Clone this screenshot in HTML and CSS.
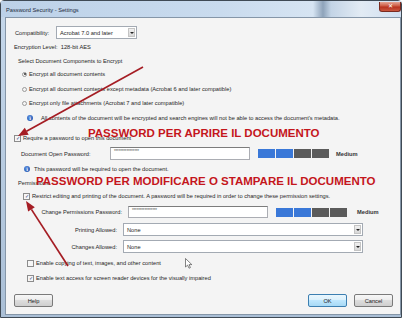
FILE: index.html
```html
<!DOCTYPE html>
<html lang="en">
<head>
    <meta charset="UTF-8">
    <meta name="viewport" content="width=device-width, initial-scale=1.0">
    <title>Password Security - Settings</title>
    <link rel="stylesheet" href="styles.css">
</head>
<body>

<div class="screen">
    <div class="window">
        <!-- Title bar -->
        <div class="titlebar">
            <span class="title">Password Security - Settings</span>
            <span class="close">&#x2715;</span>
        </div>

        <div class="content">
            <div class="row compat">
                <span class="label">Compatibility:</span>
                <div class="select compat-select">Acrobat 7.0 and later<span class="select-arrow"></span></div>
            </div>
            <div class="row enc gap-s">Encryption Level:&nbsp;&nbsp;128-bit AES</div>

            <div class="row section">Select Document Components to Encrypt</div>
            <div class="row option gap-s"><span class="radio checked"></span>Encrypt all document contents</div>
            <div class="row option gap-m"><span class="radio"></span>Encrypt all document contents except metadata (Acrobat 6 and later compatible)</div>
            <div class="row option"><span class="radio"></span>Encrypt only file attachments (Acrobat 7 and later compatible)</div>
            <div class="row info gap-m"><span class="info-icon">i</span>All contents of the document will be encrypted and search engines will not be able to access the document's metadata.</div>

            <div class="row check-open gap-l"><span class="box">&#x2713;</span>Require a password to open this document</div>
            <div class="row pwd-row">
                <span class="pwd-label">Document Open Password:</span>
                <div class="input">****************</div>
                <div class="meter"><span class="seg"></span><span class="seg"></span><span class="seg off"></span><span class="seg off"></span></div>
                <span class="strength">Medium</span>
            </div>
            <div class="row info info-open"><span class="info-icon">i</span>This password will be required to open the document.</div>

            <div class="row section">Permissions</div>
            <div class="row check-perm gap-s"><span class="box">&#x2713;</span>Restrict editing and printing of the document. A password will be required in order to change these permission settings.</div>
            <div class="row field change-row gap-m">
                <span class="field-label wide">Change Permissions Password:</span>
                <div class="input">****************</div>
                <div class="meter"><span class="seg"></span><span class="seg"></span><span class="seg off"></span><span class="seg off"></span></div>
                <span class="strength far">Medium</span>
            </div>
            <div class="row field gap-m">
                <span class="field-label">Printing Allowed:</span>
                <div class="select wide-select">None<span class="select-arrow"></span></div>
            </div>
            <div class="row field">
                <span class="field-label">Changes Allowed:</span>
                <div class="select wide-select">None<span class="select-arrow"></span></div>
            </div>
            <div class="row check-sub gap-m"><span class="box empty"></span>Enable copying of text, images, and other content</div>
            <div class="row check-sub gap-m"><span class="box">&#x2713;</span>Enable text access for screen reader devices for the visually impaired</div>

            <div class="buttons">
                <div class="btn">Help</div>
                <div class="btn primary">OK</div>
                <div class="btn">Cancel</div>
            </div>
        </div>
    </div>

    <!-- Annotations drawn over the screenshot -->
    <div class="note note-open">PASSWORD PER APRIRE IL DOCUMENTO</div>
    <div class="note note-perm">PASSWORD PER MODIFICARE O STAMPARE IL DOCUMENTO</div>

    <svg class="arrows" width="405" height="324" viewBox="0 0 405 324">
        <line x1="143" y1="67" x2="26.5" y2="131.3" />
        <polygon points="18,136 28.7,134.7 24.8,127.7" />
        <line x1="68" y1="266" x2="31.4" y2="209.4" />
        <polygon points="26,201 34.8,207.2 28.1,211.6" />
    </svg>

    <svg class="cursor" width="8" height="11" viewBox="0 0 8 11">
        <path d="M0.5 0.5 L0.5 9 L2.6 7.1 L4 10.2 L5.4 9.6 L4.1 6.6 L6.8 6.6 Z" />
    </svg>
</div>

</body>
</html>
```

FILE: styles.css
```css
body {
    margin: 0;
    background: #ffffff;
    font-family: "Liberation Sans", Arial, sans-serif;
}

.screen {
    position: relative;
    width: 405px;
    height: 324px;
    overflow: hidden;
}

/* Window frame */
.window {
    width: 402px;
    height: 318px;
    box-sizing: border-box;
    display: flex;
    flex-direction: column;
    padding: 0 0 2px 4px;
    border: 1px solid #3f4a55;
    border-radius: 4px 4px 0 0;
    background: linear-gradient(to bottom, #c6d8eb, #aabfd6);
}

.titlebar {
    height: 16px;
    display: flex;
    justify-content: space-between;
    align-items: flex-start;
    margin-left: -4px;
    padding-left: 5px;
    background: linear-gradient(to right, #bcd1e8 0%, #c9dbee 55%, #d6e4f2 78%, #8ea3ba 80.5%, #c3d4e6 82.5%, #e2ebf4 90%, #cfdef0 100%);
}

.title {
    font-size: 5.7px;
    color: #1b2a3a;
    line-height: 16px;
    margin-top: 1px;
}

.close {
    width: 22px;
    height: 10px;
    margin-top: 1px;
    box-sizing: border-box;
    border: 1px solid #7a2a20;
    border-top: none;
    border-radius: 0 0 3px 3px;
    background: linear-gradient(to bottom, #e4a595, #cc5a43 45%, #b8321f 55%, #c9573f);
    color: #ffffff;
    font-size: 6px;
    line-height: 9px;
    text-align: center;
}

.content {
    flex: 1;
    background: #f4f4f4;
    border: 1px solid #8596a8;
    padding-top: 8px;
    color: #262626;
    font-size: 5.7px;
}

.row {
    display: flex;
    align-items: center;
    height: 10px;
    margin-top: 4px;
    white-space: nowrap;
}

.gap-s { margin-top: 3px; }
.gap-m { margin-top: 5px; }
.gap-l { margin-top: 10px; }

/* Compatibility row */
.compat {
    height: 13px;
    margin-top: 0;
    padding-left: 9px;
}

.compat .label {
    width: 41px;
}

.enc { padding-left: 8px; }
.section { padding-left: 12px; }

/* Select boxes */
.select {
    height: 13px;
    box-sizing: border-box;
    display: flex;
    align-items: center;
    padding-left: 3px;
    border: 1px solid #a3aab3;
    background: #ffffff;
}

.compat-select { width: 81px; }
.wide-select { width: 240px; }

.select-arrow {
    margin-left: auto;
    margin-right: 1px;
    width: 7px;
    height: 9px;
    background: linear-gradient(to bottom, #f0f0f0, #d8d8d8);
    border: 1px solid #c4c4c4;
    box-sizing: border-box;
    display: flex;
    align-items: center;
    justify-content: center;
}

.select-arrow::after {
    content: "";
    border-left: 2px solid transparent;
    border-right: 2px solid transparent;
    border-top: 2px solid #222222;
}

/* Radio buttons */
.option { padding-left: 16px; }

.radio {
    width: 5px;
    height: 5px;
    margin-right: 2px;
    border: 1px solid #9a9a9a;
    border-radius: 50%;
    background: #f4f4f4;
    box-sizing: border-box;
    display: flex;
    align-items: center;
    justify-content: center;
}

.radio.checked::after {
    content: "";
    width: 2px;
    height: 2px;
    border-radius: 50%;
    background: #333333;
}

/* Info lines */
.info { padding-left: 21px; }

.info-icon {
    width: 6px;
    height: 6px;
    margin-right: 8px;
    border-radius: 50%;
    background: radial-gradient(circle at 40% 35%, #5c8fe0, #1b4fa8);
    color: #ffffff;
    font-size: 4.5px;
    font-weight: bold;
    font-family: "DejaVu Serif", serif;
    display: flex;
    align-items: center;
    justify-content: center;
}

.info-open { padding-left: 18px; }
.info-open .info-icon { margin-right: 4px; }

/* Checkboxes */
.box {
    width: 5px;
    height: 5px;
    margin-right: 2px;
    border: 1px solid #8c8c8c;
    background: #f6f6f6;
    color: #2a3f7a;
    font-size: 5px;
    line-height: 5px;
    text-align: center;
    box-sizing: content-box;
    overflow: hidden;
}

.check-open { padding-left: 8px; }
.check-perm { padding-left: 17px; }
.check-sub { padding-left: 21px; }

/* Password rows */
.pwd-row {
    height: 13px;
    padding-left: 15px;
}

.pwd-label { width: 89px; }

.input {
    width: 140px;
    height: 13px;
    box-sizing: border-box;
    padding-left: 3px;
    border: 1px solid #abadb3;
    border-top-color: #7c7c7c;
    background: #ffffff;
    color: #666666;
    font-size: 4.5px;
    line-height: 8px;
    letter-spacing: -0.2px;
}

.meter {
    display: flex;
    gap: 1px;
    margin-left: 8px;
}

.seg {
    width: 17px;
    height: 9px;
    background: #3a78d8;
}

.seg.off { background: #5b5b5b; }

.strength {
    margin-left: 7px;
    font-weight: bold;
    color: #333333;
}

.strength.far { margin-left: 10px; }

/* Permission fields */
.field { height: 13px; }
.change-row { height: 12px; }
.change-row .input { height: 12px; }

.field-label {
    width: 111px;
    margin-right: 6px;
    text-align: right;
}

.field-label.wide { width: 116px; }

/* Bottom buttons */
.buttons {
    display: flex;
    gap: 7px;
    margin-top: 11px;
    padding: 0 7px 0 8px;
}

.buttons .btn:first-child { margin-right: auto; }

.btn {
    width: 39px;
    height: 13px;
    box-sizing: border-box;
    border: 1px solid #7a7a7a;
    border-radius: 2px;
    background: linear-gradient(to bottom, #f7f7f7, #ebebeb 50%, #dddddd 50%, #cfcfcf);
    display: flex;
    align-items: center;
    justify-content: center;
    color: #222222;
}

.btn.primary {
    border-color: #3c7fb1;
    background: linear-gradient(to bottom, #eaf6fd, #d9f0fc 50%, #bee6fd 50%, #a7d9f5);
}

/* Annotations */
.note {
    position: absolute;
    font-family: "Liberation Sans", Arial, sans-serif;
    font-weight: bold;
    font-size: 11.5px;
    line-height: 12px;
    color: #c4161c;
    white-space: nowrap;
}

.note-open { left: 88px; top: 126.5px; }
.note-perm { left: 36px; top: 174.5px; }

.arrows {
    position: absolute;
    left: 0;
    top: 0;
    pointer-events: none;
}

.arrows line {
    stroke: #a51d24;
    stroke-width: 1.7;
}

.arrows polygon { fill: #a51d24; }

.cursor {
    position: absolute;
    left: 185px;
    top: 258px;
}

.cursor path {
    fill: #ffffff;
    stroke: #333333;
    stroke-width: 0.6;
}
```
